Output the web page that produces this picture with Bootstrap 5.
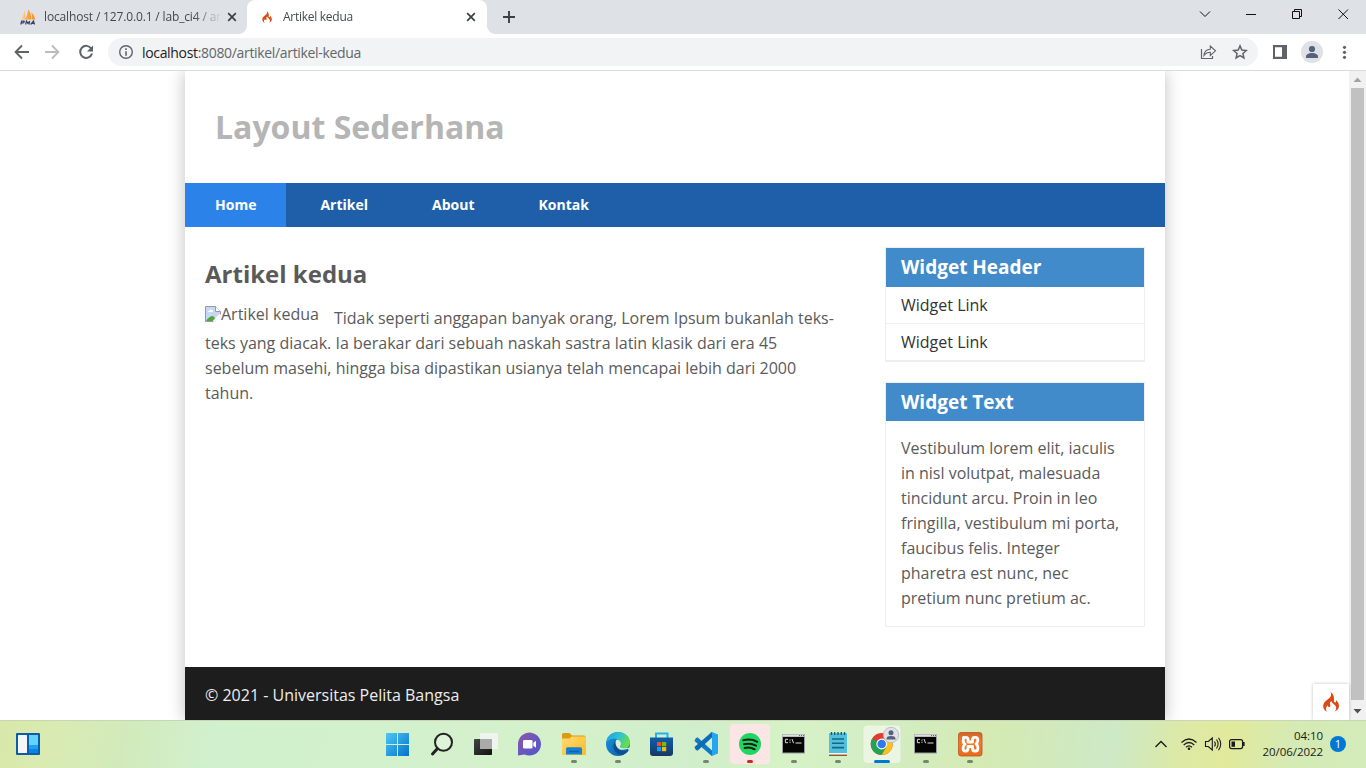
<!DOCTYPE html>
<html lang="id">
<head>
<meta charset="utf-8">
<meta name="viewport" content="width=device-width, initial-scale=1">
<title>Artikel kedua</title>
<link rel="stylesheet" href="https://cdn.jsdelivr.net/npm/bootstrap@5.3.0/dist/css/bootstrap.min.css">
<style>
  body { font-family: "Open Sans", sans-serif; color: #5a5a5a; font-size: 16px; line-height: 25px; background: #fff; }
  svg { display: block; flex: none; }
  .screen { width: 1366px; height: 768px; }

  /* browser chrome */
  .tabstrip { height: 34px; background: #dee1e6; }
  .tab-item { height: 34px; font-size: 12px; line-height: 34px; color: #45494d; position: relative; }
  .tab-idle { width: 247px; padding-left: 20px; padding-right: 10px; }
  .tab-live { width: 240px; padding-left: 12px; padding-right: 11px; background: #fff; border-radius: 8px 8px 0 0; }
  .tab-live::before, .tab-live::after { content: ""; position: absolute; bottom: 0; width: 8px; height: 8px; }
  .tab-live::before { left: -8px; background: radial-gradient(circle at 0 0, transparent 7.5px, #fff 8px); }
  .tab-live::after { right: -8px; background: radial-gradient(circle at 100% 0, transparent 7.5px, #fff 8px); }
  .tab-title { margin-left: 8px; width: 177px; letter-spacing: -.15px; -webkit-mask-image: linear-gradient(90deg, #000 150px, transparent 178px); mask-image: linear-gradient(90deg, #000 150px, transparent 178px); }
  .tab-live .tab-title { letter-spacing: -.27px; }
  .toolbar { height: 37px; border-bottom: 1px solid #d9dadc; padding-left: 14px; }
  .omnibox { width: 1150px; height: 28px; margin-left: 14px; background: #f1f3f4; padding: 0 10px; font-size: 14px; color: #63676b; }
  .url { margin-left: 8px; letter-spacing: -.33px; }
  .url b { font-weight: 400; color: #202124; }

  /* page */
  .viewport-area { height: 649px; }
  .sheet { width: 980px; margin-left: 185px; box-shadow: 0 0 1em rgba(0,0,0,.25); }
  .sheet-head { height: 112px; padding: 0 30px; }
  .sheet-head h1 { font-size: 32px; line-height: 40px; font-weight: 700; color: #b5b5b5; }
  .menu { height: 44px; background: #1f5faa; font-size: 14px; font-weight: 700; }
  .menu .nav-link { color: #fff; padding: 0 30px; line-height: 44px; margin-right: 4px; }
  .menu .nav-link.active { background: #2b83ea; }
  .sheet-body { height: 440px; padding: 20px 20px 0 20px; }
  .article { width: 640px; padding-top: 11px; }
  .article h2 { font-size: 24px; line-height: 32px; font-weight: 700; color: #5a5a5a; margin-bottom: 16px; }
  .thumb { margin-right: 15px; line-height: 17px; height: 18px; }
  .widget { width: 260px; border: 1px solid #eee; }
  .widget h3 { background: #428bca; color: #fff; font-size: 19px; font-weight: 700; line-height: 25px; padding: 7px 15px 6px; margin: 0; }
  .widget .list-group-item { padding: 6px 15px 5px; border-width: 0 0 1px; border-color: #eee; color: #333; line-height: 25px; }
  .widget-links h3 { padding-bottom: 7px; }
  .sheet-foot { height: 53px; background: #1d1d1d; color: #eee; padding: 16px 20px 12px; }
  .scroller { width: 17px; background: #f1f1f1; }
  .scroller .thumb-bar { width: 13px; height: 612px; background: #c1c1c1; margin: 0 2px; }
  .flame { position: absolute; right: 17px; bottom: 0; width: 36px; height: 36px; background: #fff; box-shadow: 0 0 3px rgba(0,0,0,.25); }

  /* taskbar */
  .taskbar { height: 48px; border-top: 1px solid #c9d6b6; position: relative; color: #1a1a1a;
    background: linear-gradient(100deg, #d8e8a8 0, #d9ebb1 50px, #d2eabb 125px, #d1f0cd 210px, #d4f1cb 560px, #d0eecb 690px, #d6f2c6 780px, #d3edc2 880px, #d5eab3 980px, #cde9c6 1100px, #dde9a5 1170px, #e1ea9b 1215px, #d5eab4 1275px, #d2ecbb 1366px); }
  .apps { height: 48px; margin-top: -1px; }
  .tray { position: absolute; right: 20px; top: -1px; height: 47px; font-size: 11.500px; line-height: 16px; }
  .clock { width: 66px; letter-spacing: -.05px; white-space: nowrap; }
  .notice { width: 16px; height: 16px; background: #0078d4; color: #fff; font-size: 11px; margin-left: 7px; }
</style>
</head>
<body>
<svg width="0" height="0" class="position-absolute">
  <defs>
    <linearGradient id="gWin" x1="0" y1="0" x2="1" y2="1"><stop stop-color="#4cc8f5"/><stop offset="1" stop-color="#0671cb"/></linearGradient>
    <linearGradient id="gDark" x1="0" y1="0" x2="1" y2="1"><stop stop-color="#444"/><stop offset="1" stop-color="#111"/></linearGradient>
    <linearGradient id="gChat" x1="0" y1="0" x2="1" y2="1"><stop stop-color="#8b5aa8"/><stop offset="1" stop-color="#4d55cf"/></linearGradient>
    <linearGradient id="gFold" x1="0" y1="0" x2="1" y2="1"><stop stop-color="#ffd975"/><stop offset="1" stop-color="#fcbb24"/></linearGradient>
    <linearGradient id="gEdgeA" x1="0" y1="0" x2="1" y2=".4"><stop stop-color="#1d9be0"/><stop offset=".55" stop-color="#2fc2d5"/><stop offset="1" stop-color="#66dd4d"/></linearGradient>
    <linearGradient id="gEdgeB" x1="0" y1="0" x2="1" y2="1"><stop stop-color="#1795dd"/><stop offset="1" stop-color="#0b59a7"/></linearGradient>
    <linearGradient id="gBag" x1="0" y1="0" x2="0" y2="1"><stop stop-color="#0d60ac"/><stop offset="1" stop-color="#173763"/></linearGradient>
    <linearGradient id="gXam" x1="0" y1="0" x2="0" y2="1"><stop stop-color="#d2622a"/><stop offset=".4" stop-color="#f57c28"/><stop offset="1" stop-color="#e8691b"/></linearGradient>
    <linearGradient id="gSail" x1="0" y1="0" x2="1" y2="0"><stop stop-color="#fbdcae"/><stop offset=".55" stop-color="#f9a03a"/><stop offset="1" stop-color="#f7941d"/></linearGradient>
    <symbol id="flame" viewBox="0 0 16 20"><path fill="#dd4814" d="M7.600 0c1.100 2.400.5 4.300-1.200 6C4.200 8.200.2 10 .2 14.200c0 2.500 1.500 4.600 4.200 5.600-1.300-1.200-1.700-2.400-1.400-3.800.3-1.100 1.100-1.900 1.900-2.800.2 1.500.7 2 1.600 1.900 1.200-.2 1-1.500.6-2.500-.5-1.400.1-2.600 1.300-3.500 0 2.200 4.300 3.500 4.700 6.300.2 1.700-.4 3.200-1.800 4.300 2.700-.9 4.600-2.900 4.700-5.600 0-2.900-1.500-4.500-3-6.100.3 1.200 0 2.300-.9 2.500-.9.100-1.400-.6-1.200-1.700C11.300 5.700 10.800 2.200 7.600 0z"/></symbol>
    <symbol id="cross" viewBox="0 0 10 10"><path d="M1.200 1.200l7.600 7.600M8.800 1.200L1.200 8.800" stroke="#3c4043" stroke-width="1.700"/></symbol>
    <symbol id="terminal" viewBox="0 0 44 48"><rect x="11" y="14" width="23" height="19.500" fill="#9a9ca0"/><rect x="11.500" y="14.500" width="22" height="2" fill="#dcdee2"/><path d="M28 15.500h1m1 0h1m1 0h1" stroke="#666"/><rect x="12" y="17" width="21" height="15.500" fill="#050505"/><path d="M17 19.300h-2.600v3.400H17M19 19.500v1.200m0 1v1.200M21 19l1.600 4.200M24.500 23h6" fill="none" stroke="#ddd" stroke-width="1"/></symbol>
  </defs>
</svg>

<div class="screen d-flex flex-column overflow-hidden">
  <header>
    <div class="tabstrip d-flex">
      <div class="tab-item tab-idle d-flex align-items-center">
        <svg width="16" height="16" viewBox="0 0 16 16"><path fill="url(#gSail)" d="M.8 10.500C2.800 8 4 4.500 4.600 1.200L5.600 10.500zM5 10.500C7 7 8 3 8.300.3c2.300 3 3 7 2.900 10.200zM11.600 10.500c.4-2.500.2-5-.3-7.300 2.300 2 3.500 5 3.900 7.300z"/><g fill="none" stroke="#39406e" stroke-width="1.200"><path d="M.8 15.500l.9-3.400h2.400q.8 1.700-2.600 1.900M5.600 15.500l.9-3.400 1.300 2.200 1.900-2.200-.8 3.400M10.600 15.500l2.900-3.400 1 3.400M12 14.400h2.300"/></g></svg>
        <span class="tab-title text-nowrap overflow-hidden">localhost / 127.0.0.1 / lab_ci4 / ar</span>
        <svg class="ms-auto" width="10" height="10"><use href="#cross"/></svg>
      </div>
      <div class="tab-item tab-live d-flex align-items-center">
        <svg width="16" height="14"><use href="#flame" x="3" y="1" width="10" height="12"/></svg>
        <span class="tab-title text-nowrap">Artikel kedua</span>
        <svg class="ms-auto" width="10" height="10"><use href="#cross"/></svg>
      </div>
      <svg class="align-self-center" width="44" height="14" viewBox="0 0 44 14"><path d="M16 7h12M22 1v12" stroke="#3c4043" stroke-width="1.900"/></svg>
      <svg class="ms-auto" width="182" height="34" viewBox="1184 0 182 34" fill="none" stroke="#111"><path d="M1200 11.500l5 5 5-5M1246 14.500h10M1292.500 11.500h7v7h-7zM1294.500 11.500v-2h7v7h-2M1338.500 9.500l9.500 9.500M1348 9.500l-9.500 9.500"/></svg>
    </div>
    <div class="toolbar d-flex align-items-center bg-white">
      <svg width="80" height="16" viewBox="14 44 80 16" fill="none" stroke-width="1.900"><path d="M29 52H16M22 45.500L15.600 52l6.400 6.500" stroke="#5f6368"/><path d="M45 52h13M52 45.500l6.400 6.500-6.400 6.500" stroke="#babcbe"/><path d="M91.200 48.500A6 6 0 1 0 92 53.500" stroke="#5f6368" stroke-width="2"/><path d="M93 45.500v6h-6z" fill="#5f6368"/></svg>
      <div class="omnibox rounded-pill d-flex align-items-center">
        <svg width="16" height="16" viewBox="0 0 16 16"><circle cx="8" cy="8" r="6.300" fill="none" stroke="#5f6368" stroke-width="1.400"/><path d="M8 4.300v1.600M8 7.200v4.600" stroke="#5f6368" stroke-width="1.600"/></svg>
        <span class="url"><b>localhost</b>:8080/artikel/artikel-kedua</span>
        <svg class="ms-auto" width="48" height="18" viewBox="1200 43 48 18" fill="none" stroke="#5f6368"><path d="M1201.500 49v9.500h11V56" stroke-width="1.200"/><path d="M1204 55.500c.3-4 2.500-6 6.300-6.200V46l5.200 4.800-5.200 4.700v-3.200c-2.800 0-4.700 1-6.300 3.200z" stroke-width="1.100"/><path d="M1240 45.900l1.800 4.200 4.500.4-3.400 3 1 4.400-3.900-2.300-3.900 2.300 1-4.400-3.400-3 4.500-.4z" stroke-width="1.500"/></svg>
      </div>
      <svg class="ms-1" width="88" height="24" viewBox="1262 40 88 24"><path d="M1273 45h14v14h-14zM1275 47.200v9.600h7v-9.600z" fill="#5f6368" fill-rule="evenodd"/><circle cx="1312" cy="52" r="11" fill="#dee1e6"/><circle cx="1312" cy="49" r="3.100" fill="#56617a"/><path d="M1306 58v-1.500c0-2.200 3-3.500 6-3.500s6 1.300 6 3.500V58z" fill="#56617a"/><g fill="#5f6368"><circle cx="1344.500" cy="47.300" r="1.600"/><circle cx="1344.500" cy="52.300" r="1.600"/><circle cx="1344.500" cy="57.300" r="1.600"/></g></svg>
    </div>
  </header>

  <div class="viewport-area d-flex position-relative overflow-hidden">
    <div class="sheet d-flex flex-column bg-white">
      <div class="sheet-head d-flex align-items-center"><h1 class="m-0">Layout Sederhana</h1></div>
      <nav class="menu nav flex-nowrap">
        <a class="nav-link active" href="#">Home</a>
        <a class="nav-link" href="#">Artikel</a>
        <a class="nav-link" href="#">About</a>
        <a class="nav-link" href="#">Kontak</a>
      </nav>
      <div class="sheet-body d-flex justify-content-between">
        <article class="article">
          <h2>Artikel kedua</h2>
          <span class="thumb float-start d-flex"><svg width="16" height="16" viewBox="0 0 16 16"><path d="M.5.500h10l5 5v10H.5z" fill="#c6d7f6" stroke="#9a9a9a"/><path d="M10.500.500v5h5" fill="#fff" stroke="#9a9a9a"/><path d="M3 6q0-1.600 1.500-1.600Q5.500 2.500 7 4.300q1.300.3 1 1.700z" fill="#fff"/><path d="M1 15q3-5 7-5l3 3-2 2z" fill="#50a83b"/><path d="M9.500 16l6.500-6.500V16z" fill="#fff"/><path d="M8.500 15.500l7-7" stroke="#fff" stroke-width="2"/></svg><span>Artikel kedua</span></span>
          <p class="m-0">Tidak seperti anggapan banyak orang, Lorem Ipsum bukanlah teks-teks yang diacak. Ia berakar dari sebuah naskah sastra latin klasik dari era 45 sebelum masehi, hingga bisa dipastikan usianya telah mencapai lebih dari 2000 tahun.</p>
        </article>
        <aside>
          <section class="widget widget-links">
            <h3>Widget Header</h3>
            <div class="list-group rounded-0">
              <a href="#" class="list-group-item">Widget Link</a>
              <a href="#" class="list-group-item">Widget Link</a>
            </div>
          </section>
          <section class="widget" style="margin-top:20px">
            <h3>Widget Text</h3>
            <p class="m-0" style="padding:15px">Vestibulum lorem elit, iaculis in nisl volutpat, malesuada tincidunt arcu. Proin in leo fringilla, vestibulum mi porta, faucibus felis. Integer pharetra est nunc, nec pretium nunc pretium ac.</p>
          </section>
        </aside>
      </div>
      <footer class="sheet-foot">© 2021 - Universitas Pelita Bangsa</footer>
    </div>
    <div class="scroller ms-auto position-relative">
      <svg width="17" height="17" viewBox="0 0 17 17"><path d="M4.500 11l4-4.500 4 4.500z" fill="#a3a3a3"/></svg>
      <div class="thumb-bar"></div>
      <svg width="17" height="20" viewBox="0 0 17 20"><path d="M4.500 9l4 4.500 4-4.500z" fill="#505050"/></svg>
    </div>
    <div class="flame d-flex align-items-center justify-content-center"><svg width="16" height="20"><use href="#flame" width="16" height="20"/></svg></div>
  </div>

  <div class="taskbar">
    <svg class="position-absolute" style="left:16px;top:12px" width="24" height="22" viewBox="0 0 24 22"><rect width="24" height="22" rx="1" fill="#0b5cab"/><rect x="2" y="2" width="9" height="18" rx=".5" fill="#f5f6f8"/><path d="M13 2h9v10h-9z" fill="#62d3fd"/><path d="M13 12h9v4h-9z" fill="#1ba0f2"/><path d="M13 16h9v4h-9z" fill="#0883e8"/></svg>
    <div class="apps d-flex justify-content-center">
      <svg width="44" height="48"><path d="M11 13h11v11H11zM23 13h11v11H23zM11 25h11v11H11zM23 25h11v11H23z" fill="url(#gWin)"/></svg>
      <svg width="44" height="48" fill="none" stroke="#222"><circle cx="24.500" cy="22.300" r="8.500" stroke-width="2" fill="#fff" fill-opacity=".25"/><path d="M18.300 28.700L13.500 34" stroke-width="3" stroke-linecap="round"/></svg>
      <svg width="44" height="48"><rect x="11" y="19" width="18" height="16" rx=".7" fill="url(#gDark)"/><rect x="17" y="13" width="18" height="16" rx=".7" fill="#f4f4f6" fill-opacity=".88"/><path d="M17 19h12v10H17z" fill="#aaa"/></svg>
      <svg width="44" height="48"><path d="M11 35.500V24a11.500 11.500 0 1 1 6.500 10.400z" fill="url(#gChat)"/><rect x="16" y="20" width="9.500" height="8.500" rx="1.300" fill="#fff"/><path d="M26.300 22.700l2.700-2v7l-2.700-2z" fill="#fff"/></svg>
      <svg width="44" height="48"><path d="M11 14.500q0-1.500 1.500-1.500h6l2.500 2.500h12q1.500 0 1.500 1.500v5H11z" fill="#dc9a12"/><path d="M11 18.500h7.500l2-2H33.500q1.500 0 1.500 1.500v16q0 1-1 1H12q-1 0-1-1z" fill="url(#gFold)"/><path d="M15 34.500V29q0-1.700 1.700-1.700h12.600Q31 27.300 31 29v5.500z" fill="#1381d1"/><path d="M18 31.500h10" stroke="#0b62b0" stroke-width="1.500"/><rect x="20" y="40" width="6" height="3" rx="1.500" fill="#768670"/></svg>
      <svg width="44" height="48"><circle cx="23" cy="24" r="12" fill="url(#gEdgeB)"/><path d="M11 23C12 16 17 12 23 12c7.500 0 12 5.500 12 10.500 0 4-3 6-6 6-3.300 0-4.700-1-3.800-2.200 1.600-2 .9-6.200-3.700-7.200C17 18.200 12.500 20 11 23z" fill="url(#gEdgeA)"/><path d="M19.500 22c-3.500 6 1 13 8 13 3-1 5-2.800 6.500-5.200-4 2-9 1.500-10.500-1.300-.9-1.800-.4-2.800 1.300-3.300-.3-3.200-3.300-5.200-5.300-3.200z" fill="#0e4f94"/><path d="M25.200 26.300c1.600-2 .9-6-3-6.700-3 2-1.500 6.500.8 8.600 1.800 1.700 6 2.200 10 .5l.3 1.300 2-2.500-5.500.8c-3.500 0-5.500-.8-4.600-2z" fill="#d6f1cc"/><rect x="20" y="40" width="6" height="3" rx="1.500" fill="#768670"/></svg>
      <svg width="44" height="48"><path d="M17 19v-5.500h11.500V19" fill="none" stroke="#22b2ee" stroke-width="2"/><path d="M11 17.500h23V33q0 3-3 3H14q-3 0-3-3z" fill="url(#gBag)"/><path d="M18 22h4.200v4.200H18z" fill="#f25022"/><path d="M23 22h4.200v4.200H23z" fill="#7fba00"/><path d="M18 27h4.200v4.200H18z" fill="#00a4ef"/><path d="M23 27h4.200v4.200H23z" fill="#ffb900"/></svg>
      <svg width="44" height="48"><path d="M12.500 18.500l2-1.200L29 30.500V36l-.5-.2L11.500 21z" fill="#1079c4"/><path d="M12.500 29.500l2 1.200L29 17.500V12l-.5.200L11.500 27z" fill="#0e6cb5"/><path d="M29 12l6 2.500v19L29 36z" fill="#27a4f0"/><rect x="20" y="40" width="6" height="3" rx="1.500" fill="#768670"/></svg>
      <svg width="44" height="48"><rect x="3" y="4" width="40" height="40" rx="4" fill="#fbe6e5"/><circle cx="23" cy="24" r="11" fill="#1fd760"/><path d="M16.300 20.300q7.500-2 14 1.500M17 24.300q6.500-1.700 12 1.400M17.700 28q5.500-1.400 10 1.300" fill="none" stroke="#0d1f14" stroke-width="2" stroke-linecap="round"/><rect x="20" y="40" width="6" height="3" rx="1.500" fill="#c62b20"/></svg>
      <svg width="44" height="48"><use href="#terminal" width="44" height="48"/><rect x="20" y="40" width="6" height="3" rx="1.500" fill="#768670"/></svg>
      <svg width="44" height="48"><rect x="14" y="13" width="18" height="22" rx="1" fill="#52bfdd"/><path d="M14 33h18v1.700H14z" fill="#f4f4f4"/><path d="M14 34.700h18V36H14z" fill="#a5510f"/><path d="M16.500 12v3m3.200-3v3m3.300-3v3m3.300-3v3m3.200-3v3" stroke="#145a70" stroke-width="1.300"/><path d="M17 19h12M17 23.300h12M17 27.600h12" stroke="#156883" stroke-width="1.600"/><rect x="20" y="40" width="6" height="3" rx="1.500" fill="#768670"/></svg>
      <svg width="44" height="48"><rect x="4" y="5" width="38" height="38.500" rx="4" fill="#eaf6e2" stroke="#d2e2c4" stroke-width=".6"/><circle cx="22.700" cy="24" r="11" fill="#e33b2e"/><path d="M22.700 24L13.200 18.500A11 11 0 0 0 22.700 35l4.800-8.200z" fill="#23a455"/><path d="M22.700 24l4.700 2.700L22.700 35A11 11 0 0 0 32.300 18.700H22.700z" fill="#fcc31e"/><circle cx="22.700" cy="24" r="5.400" fill="#fff"/><circle cx="22.700" cy="24" r="4.300" fill="#3079ee"/><circle cx="32" cy="15" r="7.700" fill="#dfe2e8" stroke="#a8adb3" stroke-width=".7"/><circle cx="32" cy="12.700" r="2.500" fill="#56617a"/><path d="M27.500 19.500v-.8c0-2 2-2.700 4.500-2.700s4.500.7 4.500 2.700v.8z" fill="#56617a"/><rect x="15" y="40" width="16" height="3" rx="1.500" fill="#0077d7"/></svg>
      <svg width="44" height="48"><use href="#terminal" width="44" height="48"/><rect x="20" y="40" width="6" height="3" rx="1.500" fill="#768670"/></svg>
      <svg width="44" height="48"><rect x="11.500" y="12.500" width="23.500" height="23.500" rx="2.500" fill="url(#gXam)" stroke="#b95520" stroke-width=".8"/><path d="M16.500 17.300h2.300q2.200 0 2.200 2.200v2.500h4.500v-2.500q0-2.200 2-2.200h1q2.200 0 2.200 2.200v1.300q0 2-1.700 3.200 1.800 1.200 1.800 3v1.500q0 2.500-2.200 2.500h-1q-2.100 0-2.100-2.200V26.500H21v2.300q0 2.200-2.200 2.200h-.6q-2 0-2-2v-1.500q0-2 1.800-3.200-1.700-1-1.700-3z" fill="none" stroke="#fff" stroke-width="2.800" stroke-linejoin="round"/><rect x="20" y="40" width="6" height="3" rx="1.500" fill="#768670"/></svg>
    </div>
    <div class="tray d-flex align-items-center">
      <svg width="94" height="24" viewBox="1154 732 94 24" fill="none" stroke="#1a1a1a"><path d="M1155.500 747l5.500-5.500 5.500 5.500" stroke-width="1.300"/><path d="M1181.500 742.500q7.500-7 15 0M1183.700 745q5.300-5 10.600 0M1186 747.300q3-2.800 6 0" stroke-width="1.200"/><circle cx="1189" cy="748.800" r="1.300" fill="#1a1a1a" stroke="none"/><path d="M1205.500 741.500h2.800l4-3.500v12l-4-3.500h-2.800zM1214.500 741.500q1.700 2.500 0 5M1216.500 739.500q3.200 4.500 0 9M1218.500 737.700q4.500 6.300 0 12.600" stroke-width="1.100"/><rect x="1229.600" y="739.600" width="13" height="9" rx="2" stroke-width="1.200"/><path d="M1231.500 741.500h3.500v5.300h-3.500z" fill="#1a1a1a" stroke="none"/><path d="M1243.700 742v4" stroke-width="1.800"/></svg>
      <div class="clock text-end" style="margin-left:9px"><div>04:10</div><div>20/06/2022</div></div>
      <div class="notice rounded-circle text-center">1</div>
    </div>
  </div>
</div>
<script src="https://cdn.jsdelivr.net/npm/bootstrap@5.3.0/dist/js/bootstrap.bundle.min.js"></script>
</body>
</html>
